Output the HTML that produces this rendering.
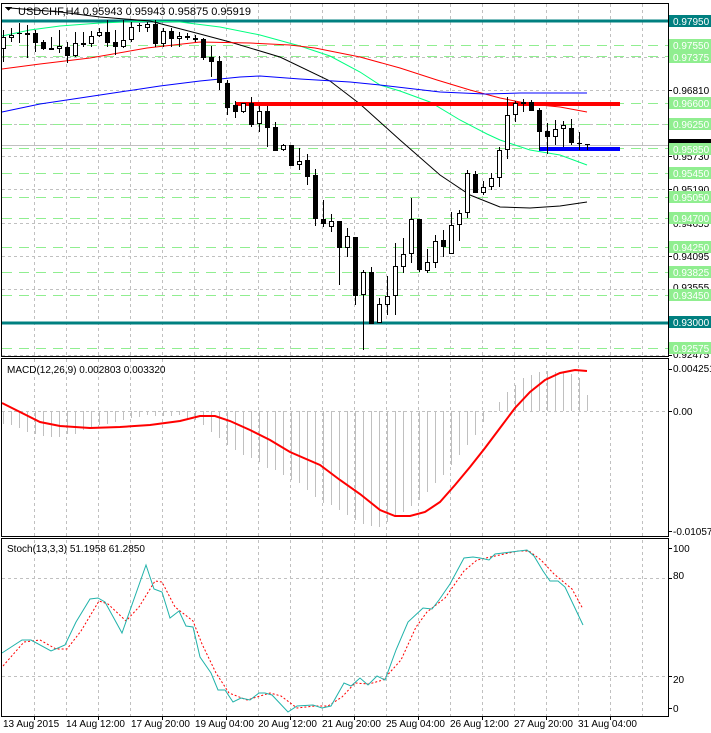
<!DOCTYPE html>
<html><head><meta charset="utf-8"><style>
html,body{margin:0;padding:0;background:#fff;}
svg{display:block;font-family:"Liberation Sans",sans-serif;}
</style></head><body>
<svg width="711" height="733" viewBox="0 0 711 733" xmlns="http://www.w3.org/2000/svg" shape-rendering="crispEdges">
<rect width="711" height="733" fill="#fff"/>
<!-- vertical grid -->
<g stroke="#c0c0c0" stroke-dasharray="3,3">
<path d="M34.5 4V356M66.5 4V356M98.5 4V356M130.5 4V356M162.5 4V356M194.5 4V356M226.5 4V356M258.5 4V356M290.5 4V356M322.5 4V356M354.5 4V356M386.5 4V356M418.5 4V356M450.5 4V356M482.5 4V356M514.5 4V356M546.5 4V356M578.5 4V356M610.5 4V356M642.5 4V356"/>
<path d="M34.5 359V536M66.5 359V536M98.5 359V536M130.5 359V536M162.5 359V536M194.5 359V536M226.5 359V536M258.5 359V536M290.5 359V536M322.5 359V536M354.5 359V536M386.5 359V536M418.5 359V536M450.5 359V536M482.5 359V536M514.5 359V536M546.5 359V536M578.5 359V536M610.5 359V536M642.5 359V536"/>
<path d="M34.5 540V716M66.5 540V716M98.5 540V716M130.5 540V716M162.5 540V716M194.5 540V716M226.5 540V716M258.5 540V716M290.5 540V716M322.5 540V716M354.5 540V716M386.5 540V716M418.5 540V716M450.5 540V716M482.5 540V716M514.5 540V716M546.5 540V716M578.5 540V716M610.5 540V716M642.5 540V716"/>
<!-- horizontal grid main -->
<path d="M2 57.5H668M2 90.5H668M2 124.5H668M2 156.5H668M2 189.5H668M2 223.5H668M2 256.5H668M2 289.5H668M2 355.5H668"/>
<path d="M2 411.5H668M2 578.5H668M2 676.5H668"/>
</g>
<!-- green dashed levels -->
<g stroke="#90ee90" stroke-width="1" stroke-dasharray="10,7">
<path d="M2 45.5H668M2 56.5H668M2 103.5H668M2 124.5H668M2 148.5H668M2 173.5H668M2 197.5H668M2 218.5H668M2 247.5H668M2 272.5H668M2 295.5H668M2 348.5H668"/>
</g>
<!-- bid line -->
<path d="M2 145.5H668" stroke="#c0c0c0"/>
<!-- teal levels -->
<path d="M2 21H668M2 323H668" stroke="#008080" stroke-width="3"/>
<!-- MAs -->
<g fill="none" stroke-width="1" shape-rendering="auto">
<polyline stroke="#00ff7f" points="2,36 30,30 60,26 100,23 150,21 180,22 220,27 260,35 300,46 330,56 360,72 380,85 400,91 430,102 460,120 487,134 500,140 530,150 560,155 587,165"/>
<polyline stroke="#000" points="10,8 60,12 100,17 150,21 200,34 230,42 280,57 330,81 360,104 400,140 440,175 470,195 500,207 530,208 560,206 587,202"/>
<polyline stroke="#ff0000" points="2,69 40,64 90,58 147,48 200,42 250,43 290,45 315,48 360,57 400,68 437,80 470,90 500,98 530,104 560,107 587,112"/>
<polyline stroke="#0000ff" points="2,112 40,104 80,98 120,92 160,86 200,81 240,77 260,76 300,79 350,82 380,85 440,92 485,94 520,93 587,93"/>
</g>
<!-- red & blue trend lines -->
<path d="M235 104H620" stroke="#ff0000" stroke-width="4"/>
<path d="M539 149H620" stroke="#0000ff" stroke-width="4"/>
<!-- candles -->
<g id="c" stroke="#000" stroke-width="1">
<path d="M3.5 30V62M11.5 28V42M19.5 23V43M27.5 25V58M35.5 30V52M43.5 40V50M51.5 37V50M59.5 30V53M67.5 42V63M75.5 32V57M83.5 32V47M91.5 31V47M99.5 28V37M107.5 20V47M115.5 30V55M123.5 20V48M131.5 22V42M139.5 23V32M147.5 22V32M155.5 20V47M163.5 28V47M171.5 28V47M179.5 32V47M187.5 33V40M195.5 35V42M203.5 38V60M211.5 46V77M219.5 56V90M227.5 80V115M235.5 101V118M243.5 103V113M251.5 97V127M259.5 106V132M267.5 106V147M275.5 122V151M283.5 144V151M291.5 145V166M299.5 148V170M307.5 154V185M315.5 169V226M323.5 200V227M331.5 214V232M339.5 221V285M347.5 228V257M355.5 237V305M363.5 270V350M371.5 267V324M379.5 298V323M387.5 276V315M395.5 243V315M403.5 238V273M411.5 198V263M419.5 219V272M427.5 249V273M435.5 235V268M443.5 230V257M451.5 212V254M459.5 210V241M467.5 170V218M475.5 171V193M483.5 181V195M491.5 173V190M499.5 147V187M507.5 97V159M515.5 101V122M523.5 99V112M531.5 100V111M539.5 108V150M547.5 123V154M555.5 120V145M563.5 121V147M571.5 119V145M579.5 132V150M587.5 144V150"/>
</g>
<g fill="#000">
<rect x="17" y="33" width="5" height="1"/><rect x="25" y="33" width="5" height="2"/><rect x="33" y="33" width="5" height="10"/><rect x="41" y="42" width="5" height="7"/><rect x="49" y="48" width="5" height="2"/><rect x="65" y="47" width="5" height="9"/><rect x="81" y="43" width="5" height="2"/><rect x="105" y="32" width="5" height="11"/><rect x="113" y="42" width="5" height="5"/><rect x="137" y="25" width="5" height="1"/><rect x="153" y="24" width="5" height="20"/><rect x="169" y="31" width="5" height="8"/><rect x="185" y="36" width="5" height="2"/><rect x="193" y="38" width="5" height="2"/><rect x="201" y="39" width="5" height="19"/><rect x="209" y="57" width="5" height="5"/><rect x="217" y="61" width="5" height="22"/><rect x="225" y="83" width="5" height="25"/><rect x="233" y="105" width="5" height="7"/><rect x="249" y="103" width="5" height="22"/><rect x="265" y="111" width="5" height="17"/><rect x="273" y="127" width="5" height="24"/><rect x="289" y="145" width="5" height="21"/><rect x="305" y="160" width="5" height="17"/><rect x="313" y="175" width="5" height="44"/><rect x="321" y="219" width="5" height="5"/><rect x="337" y="221" width="5" height="27"/><rect x="353" y="237" width="5" height="59"/><rect x="369" y="272" width="5" height="52"/><rect x="417" y="219" width="5" height="51"/><rect x="441" y="240" width="5" height="7"/><rect x="473" y="174" width="5" height="19"/><rect x="521" y="102" width="5" height="2"/><rect x="529" y="102" width="5" height="9"/><rect x="537" y="110" width="5" height="22"/><rect x="545" y="131" width="5" height="6"/><rect x="569" y="128" width="5" height="15"/><rect x="577" y="143" width="5" height="1"/><rect x="585" y="144" width="5" height="1"/>
</g>
<g fill="#fff" stroke="#000">
<rect x="1.5" y="37.5" width="4" height="11"/><rect x="9.5" y="35.5" width="4" height="2"/><rect x="57.5" y="46.5" width="4" height="2"/><rect x="73.5" y="43.5" width="4" height="12"/><rect x="89.5" y="36.5" width="4" height="7"/><rect x="97.5" y="32.5" width="4" height="3"/><rect x="121.5" y="40.5" width="4" height="6"/><rect x="129.5" y="27.5" width="4" height="12"/><rect x="145.5" y="24.5" width="4" height="3"/><rect x="161.5" y="31.5" width="4" height="12"/><rect x="177.5" y="36.5" width="4" height="2"/><rect x="241.5" y="103.5" width="4" height="8"/><rect x="257.5" y="111.5" width="4" height="12"/><rect x="281.5" y="145.5" width="4" height="4"/><rect x="297.5" y="161.5" width="4" height="3"/><rect x="329.5" y="221.5" width="4" height="5"/><rect x="345.5" y="236.5" width="4" height="11"/><rect x="361.5" y="272.5" width="4" height="22"/><rect x="377.5" y="304.5" width="4" height="18"/><rect x="385.5" y="296.5" width="4" height="8"/><rect x="393.5" y="266.5" width="4" height="29"/><rect x="401.5" y="254.5" width="4" height="12"/><rect x="409.5" y="219.5" width="4" height="34"/><rect x="425.5" y="262.5" width="4" height="8"/><rect x="433.5" y="241.5" width="4" height="21"/><rect x="449.5" y="225.5" width="4" height="28"/><rect x="457.5" y="213.5" width="4" height="11"/><rect x="465.5" y="173.5" width="4" height="39"/><rect x="481.5" y="187.5" width="4" height="5"/><rect x="489.5" y="178.5" width="4" height="8"/><rect x="497.5" y="150.5" width="4" height="27"/><rect x="505.5" y="115.5" width="4" height="34"/><rect x="513.5" y="103.5" width="4" height="11"/><rect x="553.5" y="129.5" width="4" height="7"/><rect x="561.5" y="125.5" width="4" height="3"/>
</g>
<!-- title -->
<path d="M5 7L12 7L8.5 11Z" fill="#000"/>
<text x="18" y="15" font-size="11" fill="#000">USDCHF,H4  0.95943 0.95943 0.95875 0.95919</text>
<!-- MACD histogram -->
<g stroke="#c0c0c0">
<path d="M3.5 411V424M11.5 411V425M19.5 411V428M27.5 411V432M35.5 411V434M43.5 411V436M51.5 411V437M59.5 411V437M67.5 411V434M75.5 411V434M83.5 411V430M91.5 411V428M99.5 411V425M107.5 411V424M115.5 411V422M123.5 411V420M131.5 411V418M139.5 411V417M147.5 411V415M155.5 411V416M163.5 411V416M171.5 411V416M179.5 411V415M187.5 411V418M195.5 411V420M203.5 411V425M211.5 411V432M219.5 411V438M227.5 411V445M235.5 411V450M243.5 411V455M251.5 411V458M259.5 411V462M267.5 411V468M275.5 411V470M283.5 411V475M291.5 411V480M299.5 411V483M307.5 411V490M315.5 411V497M323.5 411V503M331.5 411V505M339.5 411V510M347.5 411V515M355.5 411V520M363.5 411V524M371.5 411V526M379.5 411V527M387.5 411V522M395.5 411V516M403.5 411V512M411.5 411V506M419.5 411V500M427.5 411V492M435.5 411V483M443.5 411V475M451.5 411V465M459.5 411V455M467.5 411V445M475.5 411V435M483.5 411V422M491.5 411V412M499.5 411V402M507.5 411V392M515.5 411V385M523.5 411V378M531.5 411V375M539.5 411V372M547.5 411V371M555.5 411V372M563.5 411V373M571.5 411V374M579.5 411V378M587.5 411V395"/>
</g>
<polyline fill="none" stroke="#ff0000" stroke-width="2" shape-rendering="auto" points="2,403 20,412 40,422 60,426 90,428 120,427 150,425 180,421 200,416 215,416 230,421 250,430 270,440 290,452 320,465 340,480 360,494 380,510 395,516 410,516 425,512 440,502 455,485 470,467 485,448 500,428 515,408 530,392 545,380 560,373 575,370 587,371"/>
<text x="7" y="373" font-size="10" fill="#000">MACD(12,26,9) 0.002803 0.003320</text>
<!-- Stoch -->
<polyline fill="none" stroke="#ff0000" stroke-dasharray="2,2" shape-rendering="auto" points="3,666 24,642 40,640 56,649 67,649 81,631 99,601 108,604 126,621 139,607 155,581 162,582 175,607 193,621 202,644 216,673 229,693 247,700 270,693 281,696 297,708 315,706 328,706 342,697 355,683 369,684 383,680 401,660 416,627 427,612 445,598 464,571 477,560 495,556 518,551 529,551 541,560 554,574 572,589 583,609"/>
<polyline fill="none" stroke="#20b2aa" shape-rendering="auto" points="2,653 22,640 31,640 51,651 65,645 76,622 90,599 98,598 105,602 122,633 146,565 154,589 162,592 170,618 179,611 186,626 193,627 200,657 211,673 218,690 225,690 233,702 241,698 250,700 259,693 265,693 272,695 288,712 297,706 313,705 322,708 331,706 344,683 351,686 360,678 368,685 377,676 385,680 396,650 408,622 423,608 432,609 439,600 450,584 464,558 473,557 480,558 489,560 495,554 511,552 527,550 534,556 543,571 550,581 558,581 565,587 574,606 583,625"/>
<text x="7" y="552" font-size="10" fill="#000">Stoch(13,3,3) 51.1958 61.2850</text>
<!-- frames -->
<g fill="none" stroke="#000">
<rect x="1.5" y="3.5" width="667" height="353"/>
<rect x="1.5" y="358.5" width="667" height="178"/>
<rect x="1.5" y="538.5" width="667" height="178"/>
</g>
<!-- right axis -->
<g stroke="#000">
<path d="M668 21.5H672M668 57.5H672M668 90.5H672M668 124.5H672M668 156.5H672M668 189.5H672M668 223.5H672M668 256.5H672M668 289.5H672M668 322.5H672M668 355.5H672M668 369.5H672M668 411.5H672M668 531.5H672M668 548.5H672M668 578.5H672M668 676.5H672M668 708.5H672"/>
<path d="M34.5 716V720M98.5 716V720M162.5 716V720M226.5 716V720M290.5 716V720M354.5 716V720M418.5 716V720M482.5 716V720M546.5 716V720M610.5 716V720"/>
</g>
<g font-size="10" fill="#000">
<text x="673" y="61">0.97375</text>
<text x="673" y="94">0.96810</text>
<text x="673" y="160">0.95730</text>
<text x="673" y="193">0.95190</text>
<text x="673" y="227">0.94655</text>
<text x="673" y="260">0.94095</text>
<text x="673" y="291">0.93555</text>
<text x="673" y="358">0.92475</text>
<text x="673" y="372">0.004251</text>
<text x="673" y="415">0.00</text>
<text x="673" y="535">-0.010574</text>
<text x="673" y="552">100</text>
<text x="673" y="579">80</text>
<text x="673" y="683">20</text>
<text x="673" y="712">0</text>
</g>
<rect x="669" y="139" width="42" height="12" fill="#000"/>
<g fill="#90ee90">
<rect x="669" y="39" width="42" height="12"/><rect x="669" y="51" width="42" height="12"/><rect x="669" y="97" width="42" height="12"/><rect x="669" y="118" width="42" height="12"/><rect x="669" y="143" width="42" height="12"/><rect x="669" y="167" width="42" height="12"/><rect x="669" y="191" width="42" height="12"/><rect x="669" y="212" width="42" height="12"/><rect x="669" y="241" width="42" height="12"/><rect x="669" y="266" width="42" height="12"/><rect x="669" y="289" width="42" height="12"/><rect x="669" y="342" width="42" height="12"/>
</g>
<g fill="#008080"><rect x="669" y="15" width="42" height="12"/><rect x="669" y="316" width="42" height="12"/></g>
<g font-size="10" fill="#fff">
<text x="673" y="25">0.97950</text><text x="673" y="49">0.97550</text><text x="673" y="61">0.97375</text><text x="673" y="107">0.96600</text><text x="673" y="128">0.96250</text><text x="673" y="153">0.95850</text><text x="673" y="177">0.95450</text><text x="673" y="201">0.95050</text><text x="673" y="222">0.94700</text><text x="673" y="251">0.94250</text><text x="673" y="276">0.93825</text><text x="673" y="299">0.93450</text><text x="673" y="326">0.93000</text><text x="673" y="352">0.92575</text>
</g>
<!-- dates -->
<g font-size="10" fill="#000">
<text x="3" y="727">13 Aug 2015</text>
<text x="66" y="727">14 Aug 12:00</text>
<text x="131" y="727">17 Aug 20:00</text>
<text x="195" y="727">19 Aug 04:00</text>
<text x="258" y="727">20 Aug 12:00</text>
<text x="322" y="727">21 Aug 20:00</text>
<text x="386" y="727">25 Aug 04:00</text>
<text x="450" y="727">26 Aug 12:00</text>
<text x="514" y="727">27 Aug 20:00</text>
<text x="578" y="727">31 Aug 04:00</text>
</g>
</svg>
</body></html>
